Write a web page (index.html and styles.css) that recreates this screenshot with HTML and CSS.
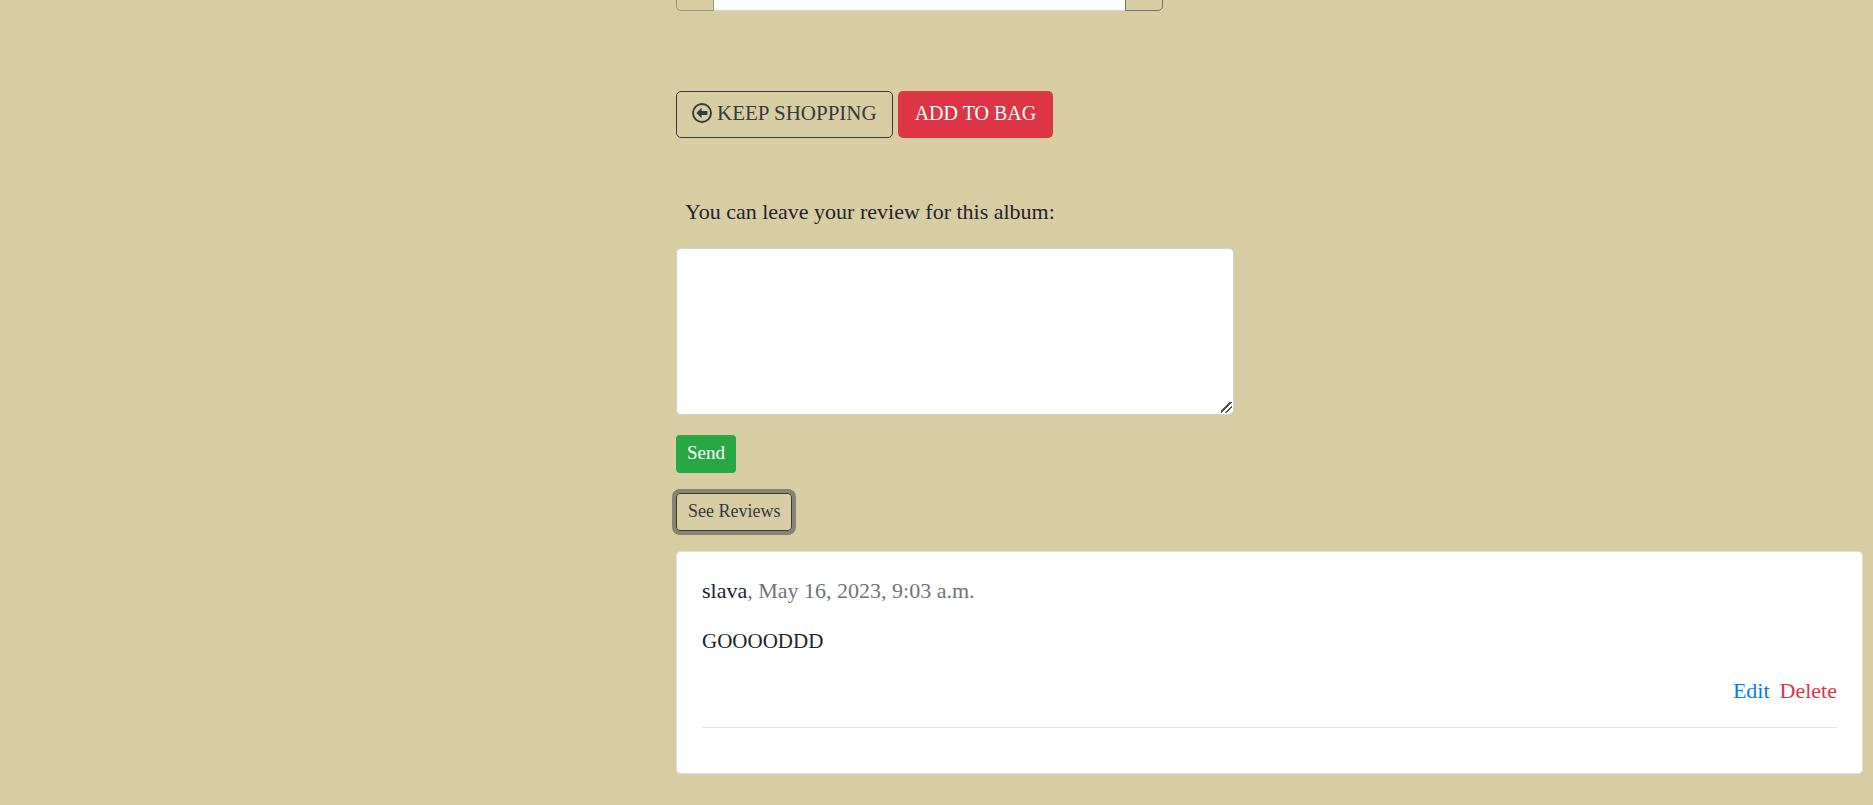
FILE: index.html
```html
<!DOCTYPE html>
<html lang="en">
<head>
<meta charset="utf-8">
<title>Album</title>
<link rel="stylesheet" href="styles.css">
</head>
<body>
<main class="page">
  <div class="details">
    <div class="quantity">
      <button class="step" type="button" aria-label="Decrease quantity" disabled></button>
      <input class="amount" type="text" aria-label="Quantity">
      <button class="step" type="button" aria-label="Increase quantity"></button>
    </div>
    <div class="actions">
      <a class="btn btn-outline" href="#">
        <svg class="icon" viewBox="0 0 20 20" aria-hidden="true"><circle cx="10" cy="10" r="9" fill="none" stroke="currentColor" stroke-width="1.9"/><path d="M4.4 10 9.6 4.8v3.3h5.8v3.8H9.6v3.3z" fill="currentColor"/></svg>
        <span>KEEP SHOPPING</span>
      </a>
      <button class="btn btn-danger" type="button">ADD TO BAG</button>
    </div>
    <form class="review-form">
      <label class="prompt" for="review">You can leave your review for this album:</label>
      <textarea class="review-text" id="review"></textarea>
      <button class="btn btn-small btn-success" type="button">Send</button>
    </form>
    <button class="btn btn-small btn-outline btn-focused" type="button">See Reviews</button>
    <section class="card">
      <p class="meta"><span class="author">slava</span>, May 16, 2023, 9:03 a.m.</p>
      <p class="comment">GOOOODDD</p>
      <div class="links">
        <a class="edit" href="#">Edit</a>
        <a class="delete" href="#">Delete</a>
      </div>
      <hr class="rule">
    </section>
  </div>
</main>
</body>
</html>
```
FILE: styles.css
```css
* { box-sizing: border-box; }

body {
  margin: 0;
  background: #d8cca3;
  color: #212529;
  font-family: "Liberation Serif", serif;
  font-size: 22px;
  line-height: 30px;
}

.page {
  display: grid;
  grid-template-columns: 676fr 1187fr;
  padding-right: 10px;
  overflow: hidden;
}

.details {
  grid-column: 2;
  display: flex;
  flex-direction: column;
  align-items: flex-start;
}

.quantity {
  display: flex;
  width: 41%;
  height: 47px;
  margin-top: -36px;
}

.step {
  flex: 0 0 38px;
  border: 1px solid #6c757d;
  background: transparent;
}

.step:first-child { border-radius: 0 0 0 5px; }
.step:last-child { border-radius: 0 0 5px 0; }
.step:disabled { opacity: 0.65; }

.amount {
  flex: 1;
  min-width: 0;
  border: 1px solid #ced4da;
  border-width: 1px 0;
  background: #fff;
}

.actions {
  display: flex;
  gap: 5px;
  margin-top: 80px;
}

.btn {
  display: flex;
  align-items: center;
  gap: 5px;
  height: 47px;
  padding: 0 15px 3px;
  border: 1px solid transparent;
  border-radius: 5px;
  font-family: inherit;
  font-size: 21px;
  line-height: 30px;
  text-decoration: none;
}

.btn-outline {
  border-color: #343a40;
  background: transparent;
  color: #343a40;
}

.btn-danger {
  padding: 0 16px 3px;
  background: #dc3545;
  color: #fff;
  font-size: 20px;
}

.btn-small {
  height: 38px;
  padding: 0 10px 2px;
  border-radius: 4px;
  font-size: 18px;
}

.btn-success {
  background: #28a745;
  color: #fff;
  font-size: 19px;
}

.btn-focused {
  margin-top: 20px;
  padding: 0 11px 2px;
  box-shadow: 0 0 0 4px rgba(52, 58, 64, 0.5);
}

.icon {
  width: 20px;
  height: 20px;
}

.review-form {
  display: flex;
  flex-direction: column;
  align-items: flex-start;
  width: 100%;
  margin-top: 59px;
}

.prompt { padding: 0 9px; }

.review-text {
  width: 47%;
  height: 167px;
  margin: 21px 0 20px;
  border: 1px solid #ced4da;
  border-radius: 5px;
  background: #fff;
  resize: both;
}

.review-text::-webkit-resizer {
  background: linear-gradient(135deg, transparent 6px, #555 6px, #555 8px, transparent 8px, transparent 10px, #555 10px, #555 12px, transparent 12px) 3px 3px / 11px 11px no-repeat;
}

.card {
  width: 100%;
  margin-top: 20px;
  padding: 24px 25px 26px;
  border: 1px solid rgba(0, 0, 0, 0.125);
  border-radius: 5px;
  background: #fff;
}

.meta {
  margin: 0 0 20px;
  color: #6c757d;
}

.author { color: #212529; }

.comment {
  margin: 0 0 20px;
  font-size: 21px;
}

.links {
  display: flex;
  justify-content: flex-end;
  gap: 10px;
}

.links a { text-decoration: none; }
.edit { color: #007bff; }
.delete { color: #dc3545; }

.rule {
  margin: 21px 0 19px;
  border: 0;
  border-top: 1px solid rgba(0, 0, 0, 0.1);
}
```
